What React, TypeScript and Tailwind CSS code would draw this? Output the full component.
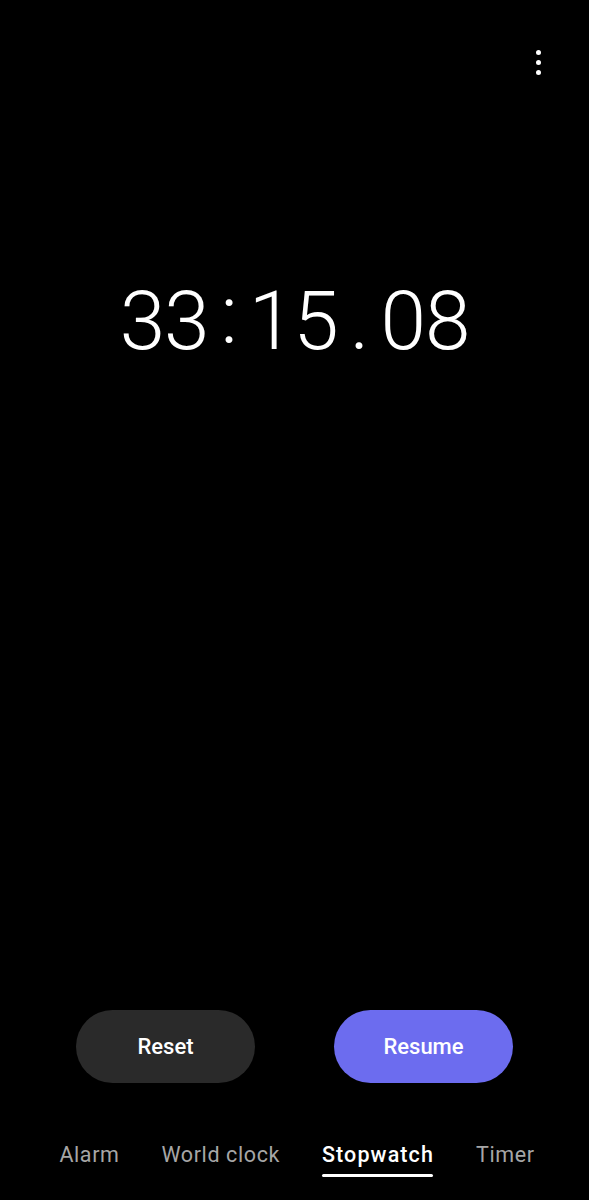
import React from "react";

export default function App() {
  const font = { fontFamily: "Roboto, 'Noto Sans', sans-serif" };
  return (
    <div className="w-[589px] h-[1200px] bg-black text-white flex flex-col overflow-hidden" style={font}>
      <div className="h-[100px] flex justify-end items-start pt-[50px] pr-[48px]">
        <div className="flex flex-col items-center gap-[5px]">
          <span className="w-[5px] h-[5px] rounded-full bg-white" />
          <span className="w-[5px] h-[5px] rounded-full bg-white" />
          <span className="w-[5px] h-[5px] rounded-full bg-white" />
        </div>
      </div>
      <div className="mt-[166px] flex justify-center items-center h-[110px] font-light text-[82px] leading-none tracking-[-1px]">
        <span>33</span>
        <span className="mx-[12px] relative -top-[6px]">:</span>
        <span>15</span>
        <span className="mx-[12px]">.</span>
        <span>08</span>
      </div>
      <div className="flex-1" />
      <div className="flex justify-center gap-[79px]">
        <button className="w-[179px] h-[73px] rounded-full bg-[#2a2a2a] text-white text-[22px] font-medium">
          Reset
        </button>
        <button className="w-[179px] h-[73px] rounded-full bg-[#6c6cef] text-white text-[22px] font-medium">
          Resume
        </button>
      </div>
      <div className="h-[117px] flex justify-center items-start pt-[56px] pl-[5px] gap-[42px] text-[21.5px] tracking-[0.6px]">
        <span className="text-[#a6a6a6]">Alarm</span>
        <span className="text-[#a6a6a6]">World clock</span>
        <span className="relative font-medium text-white tracking-[1.1px]">
          Stopwatch
          <span className="absolute left-0 right-[1px] -bottom-[6px] h-[3px] rounded-full bg-white" />
        </span>
        <span className="text-[#a6a6a6]">Timer</span>
      </div>
    </div>
  );
}
